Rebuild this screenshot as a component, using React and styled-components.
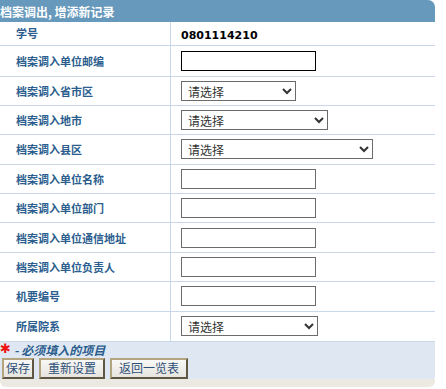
import React from 'react'
import styled, { createGlobalStyle } from 'styled-components'

const GlobalStyle = createGlobalStyle`
    body {
        margin: 0;
        background: #ffffff;
        font-family: "DejaVu Sans", "Noto Sans CJK SC", sans-serif;
    }
`

const rows = [
    { label: '档案调入单位邮编', type: 'input', focus: true, h: 31 },
    { label: '档案调入省市区', type: 'select', width: 115 },
    { label: '档案调入地市', type: 'select', width: 147 },
    { label: '档案调入县区', type: 'select', width: 192 },
    { label: '档案调入单位名称', type: 'input' },
    { label: '档案调入单位部门', type: 'input' },
    { label: '档案调入单位通信地址', type: 'input' },
    { label: '档案调入单位负责人', type: 'input' },
    { label: '机要编号', type: 'input' },
    { label: '所属院系', type: 'select', width: 137 },
]

const App = () => {
    return (
        <>
            <GlobalStyle />
            <Panel>
                <Title>档案调出, 增添新记录</Title>
                <Table>
                    <tbody>
                        <Row $h={23}>
                            <Label>学号</Label>
                            <Value><StudentNo>0801114210</StudentNo></Value>
                        </Row>
                        {rows.map((r) => (
                            <Row key={r.label} $h={r.h || 29.4}>
                                <Label>{r.label}</Label>
                                <Value>
                                    {r.type === 'input' ? (
                                        <TextInput $focus={r.focus} />
                                    ) : (
                                        <Select $w={r.width} defaultValue="">
                                            <option value="">请选择</option>
                                        </Select>
                                    )}
                                </Value>
                            </Row>
                        ))}
                    </tbody>
                </Table>
                <Footer>
                    <Note>
                        <Star>✱</Star>- 必须填入的项目
                    </Note>
                    <Buttons>
                        <Button $pad={2}>保存</Button>
                        <Button $pad={7}>重新设置</Button>
                        <Button $pad={7}>返回一览表</Button>
                    </Buttons>
                </Footer>
                <Shadow />
            </Panel>
        </>
    )
}

const Panel = styled.div`
    width: 435px;
`

const Title = styled.div`
    height: 22px;
    line-height: 23px;
    background-color: #6699bb;
    border-top-right-radius: 7px;
    color: #ffffff;
    font-family: "Noto Sans CJK SC", sans-serif;
    font-size: 12px;
    font-weight: bold;
`

const Table = styled.table`
    width: 100%;
    border-collapse: collapse;
`

const Row = styled.tr`
    height: ${(p) => p.$h}px;
    border-bottom: 1px solid #c9d8e8;

    &:last-child {
        border-bottom: none;
    }
`

const Label = styled.td`
    width: 154px;
    padding: 0 0 0 16px;
    border-right: 1px solid #c9d8e8;
    color: #2b5d8e;
    font-family: "Noto Sans CJK SC", sans-serif;
    font-size: 11px;
    font-weight: bold;
    vertical-align: middle;
`

const Value = styled.td`
    padding: 0 0 0 10px;
    vertical-align: middle;
`

const StudentNo = styled.span`
    font-family: "DejaVu Sans", sans-serif;
    font-size: 11px;
    font-weight: bold;
    color: #000000;
`

const TextInput = styled.input`
    display: block;
    box-sizing: border-box;
    width: 135px;
    height: 20px;
    margin: 0;
    padding: 0 2px;
    border: 1px solid ${(p) => (p.$focus ? '#000000' : '#6b6b6b')};
    background: #ffffff;
    outline: none;
`

const Select = styled.select`
    display: block;
    box-sizing: border-box;
    width: ${(p) => p.$w}px;
    height: 20px;
    margin: 0;
    padding: 0 0 0 2px;
    border: 1px solid #6b6b6b;
    border-radius: 0;
    background: #ffffff;
    color: #333333;
    font-family: "Noto Sans CJK SC", sans-serif;
    font-size: 12px;
`

const Footer = styled.div`
    background-color: #dfe8f2;
    border-top: 1px solid #c9d8e8;
    padding: 1px 0 2px 0;
    border-bottom-right-radius: 5px;
`

const Note = styled.div`
    display: flex;
    align-items: center;
    height: 14px;
    color: #2b5d8e;
    font-family: "Noto Sans CJK SC", sans-serif;
    font-size: 12px;
    font-weight: bold;
    font-style: italic;
`

const Star = styled.span`
    width: 11px;
    margin: -2px 3px 0 0;
    color: #ee1111;
    font-family: "DejaVu Sans", sans-serif;
    font-size: 13px;
    font-weight: bold;
    font-style: normal;
    line-height: 12px;
`

const Buttons = styled.div`
    display: flex;
    gap: 5px;
    padding: 1px 0 0 2px;
`

const Button = styled.button`
    box-sizing: border-box;
    height: 21px;
    margin: 0;
    padding: 0 ${(p) => p.$pad}px;
    border: 2px solid #b3a47e;
    border-style: outset;
    background: linear-gradient(#f8f8f6, #e6e4de);
    color: #2d4f78;
    font-family: "Noto Sans CJK SC", sans-serif;
    font-size: 12px;
    line-height: 16px;
`

const Shadow = styled.div`
    height: 8px;
    margin-top: -2px;
    background-color: #ece9e3;
    border-radius: 0 0 6px 6px;
`

export default App
